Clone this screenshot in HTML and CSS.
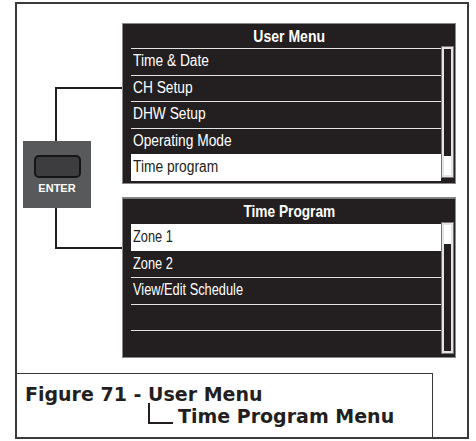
FILE: index.html
```html
<!DOCTYPE html>
<html lang="en">
<head>
<meta charset="utf-8">
<title>Figure 71 - User Menu</title>
<link rel="stylesheet" href="styles.css">
</head>
<body>
<div class="frame">
  <div class="diagram">
    <div class="controls">
      <div class="link link-up"></div>
      <div class="enter-key">
        <div class="key-cap"></div>
        <span class="key-label">ENTER</span>
      </div>
      <div class="link link-down"></div>
    </div>
    <div class="panels">
      <div class="panel">
        <div class="panel-head"><span class="narrow">User Menu</span></div>
        <div class="panel-body">
          <ul class="rows">
            <li class="row"><span class="narrow">Time &amp; Date</span></li>
            <li class="row"><span class="narrow">CH Setup</span></li>
            <li class="row"><span class="narrow">DHW Setup</span></li>
            <li class="row"><span class="narrow">Operating Mode</span></li>
            <li class="row row-active"><span class="narrow">Time program</span></li>
          </ul>
          <div class="scrollbar scrollbar-end"><div class="thumb"></div></div>
        </div>
      </div>
      <div class="panel panel-sub">
        <div class="panel-head"><span class="narrow">Time Program</span></div>
        <div class="panel-body">
          <ul class="rows">
            <li class="row row-active"><span class="narrow">Zone 1</span></li>
            <li class="row row-after"><span class="narrow">Zone 2</span></li>
            <li class="row"><span class="narrow">View/Edit Schedule</span></li>
            <li class="row"></li>
            <li class="row"></li>
          </ul>
          <div class="scrollbar"><div class="thumb"></div></div>
        </div>
      </div>
    </div>
  </div>
  <div class="caption">
    <div class="caption-line">Figure 71 - User Menu</div>
    <div class="caption-line caption-sub"><span class="elbow"></span>Time Program Menu</div>
  </div>
</div>
</body>
</html>
```
FILE: styles.css
```css
* { box-sizing: border-box; }

html, body {
  margin: 0;
  padding: 0;
  background: #ffffff;
}

.frame {
  margin: 2px 0 0 15px;
  width: 454px;
  height: 437px;
  border: 2px solid #3a3a3a;
  display: flex;
  flex-direction: column;
}

.diagram {
  height: 369px;
  display: flex;
  padding-top: 19px;
}

.controls {
  width: 105px;
  display: flex;
  flex-direction: column;
}

.link {
  margin-left: 38px;
  width: 67px;
  border-left: 2px solid #231f20;
}

.link-up {
  margin-top: 64px;
  height: 54px;
  border-top: 2px solid #231f20;
}

.link-down {
  height: 41px;
  border-bottom: 2px solid #231f20;
}

.enter-key {
  margin-left: 6px;
  width: 68px;
  height: 67px;
  background: #58595b;
  display: flex;
  flex-direction: column;
  align-items: center;
  padding-top: 14px;
}

.key-cap {
  width: 47px;
  height: 23px;
  background: #3d3d3f;
  border: 2px solid #161616;
  border-radius: 5px;
}

.key-label {
  margin-top: 4px;
  font-family: "Liberation Sans", Arial, sans-serif;
  font-weight: bold;
  font-size: 11px;
  color: #ffffff;
}

.panels {
  width: 334px;
  display: flex;
  flex-direction: column;
  gap: 13px;
}

.panel {
  height: 161px;
  background: #231f20;
  border: 1px solid #8a8a8a;
  display: flex;
  flex-direction: column;
  font-family: "Liberation Sans", Arial, sans-serif;
}

.narrow {
  display: inline-block;
  transform: scaleX(0.86);
  transform-origin: left center;
}

.panel-sub .row .narrow {
  transform: scaleX(0.8);
}

.panel-head {
  height: 24px;
  color: #ffffff;
  font-weight: bold;
  font-size: 16.5px;
  line-height: 24px;
  display: flex;
  justify-content: center;
}

.panel-head .narrow {
  transform: scaleX(0.85);
  transform-origin: center center;
}

.panel-sub .panel-head {
  height: 26px;
  line-height: 25px;
  border-top: 1px solid #7a7a7a;
}

.panel-sub .panel-head .narrow {
  transform: scaleX(0.83);
}

.panel-body {
  flex: 1;
  display: flex;
  padding-left: 8px;
}

.rows {
  list-style: none;
  margin: 0;
  padding: 0;
  width: 310px;
}

.row {
  height: 26.5px;
  border-top: 1.5px solid #e2e2e2;
  color: #ffffff;
  font-size: 16px;
  line-height: 24px;
  padding-left: 2px;
  white-space: nowrap;
}

.row-active {
  background: #ffffff;
  color: #231f20;
  border-top-color: #ffffff;
}

.row-after {
  border-top-color: transparent;
}

.scrollbar {
  margin-left: 1px;
  width: 11px;
  height: 130px;
  margin-top: -1px;
  border: 2px solid #e4e4e4;
  outline: 1px solid #777;
  display: flex;
  flex-direction: column;
}

.scrollbar .thumb {
  height: 19px;
  background: #ffffff;
}

.scrollbar-end {
  justify-content: flex-end;
}

.caption {
  width: 416px;
  flex: 1;
  border-top: 1.5px solid #3a3a3a;
  border-right: 1.5px solid #3a3a3a;
  padding: 9px 0 0 8px;
  font-family: "DejaVu Sans", sans-serif;
  font-weight: bold;
  font-size: 19px;
  color: #231f20;
}

.caption-line {
  height: 22px;
  line-height: 22px;
  white-space: nowrap;
}

.caption-sub {
  display: flex;
  align-items: flex-end;
  padding-left: 123px;
}

.elbow {
  width: 25px;
  height: 21px;
  margin-right: 5px;
  margin-bottom: 3px;
  border-left: 2px solid #231f20;
  border-bottom: 2px solid #231f20;
}
```
